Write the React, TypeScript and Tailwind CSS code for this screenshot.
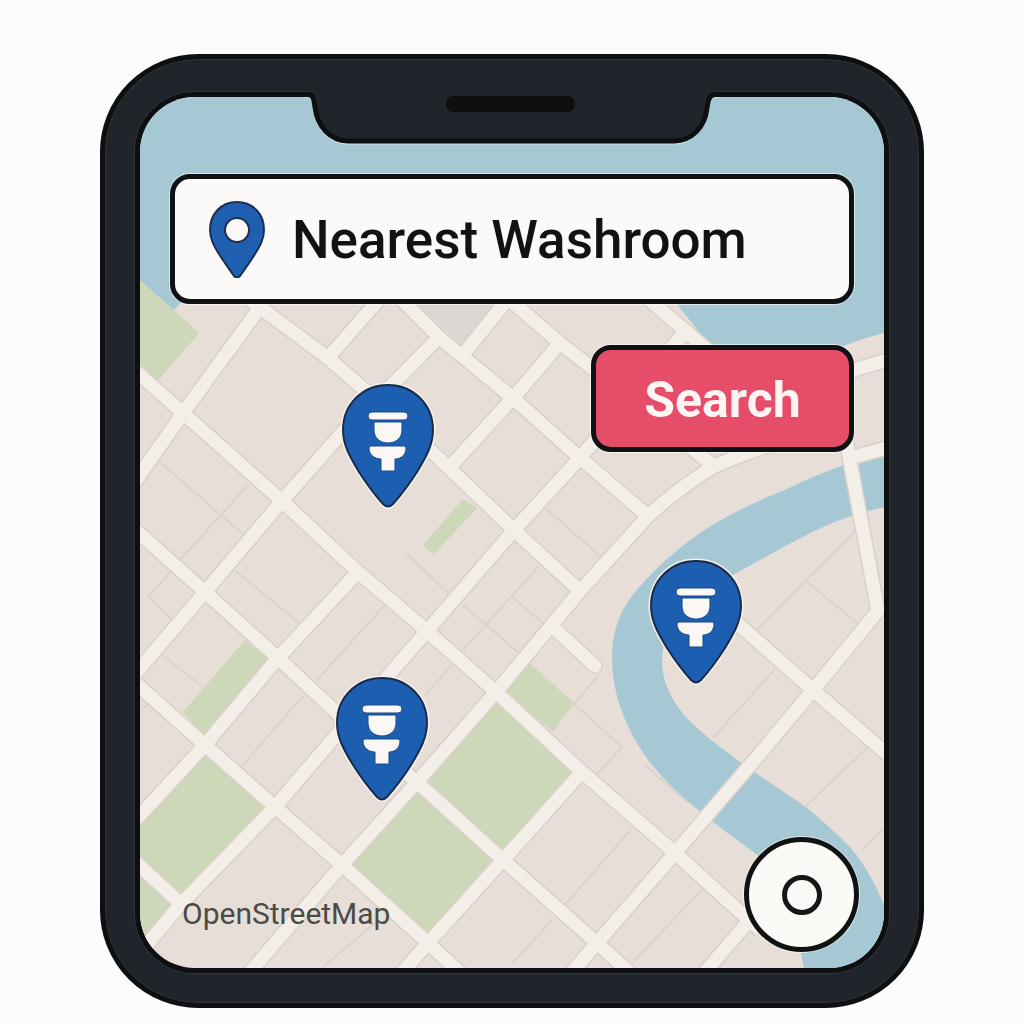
import React from "react";

const MAP = { x: 140, y: 97, width: 744, height: 871 };

const water = [
  "M140 97H884V240H140Z",
  "M140 240H240L174 310L140 281Z",
  "M600 240H884V333C868 337 855 342 843 346L800 368L712 348L676 303Z",
  "M884 453C846 462 812 477 780 492C745 506 716 521 693 538C668 556 646 578 632 596C618 615 612 634 612 657C612 698 628 731 648 760C664 780 680 796 700 811C718 827 738 840 757 855C778 880 794 918 804 968H884V905C874 880 860 856 843 840C830 828 818 816 803 805C782 791 765 779 748 768C728 753 706 737 692 723C674 706 662 684 662 660C662 628 690 600 733 575C768 556 804 534 840 520C855 514 870 511 884 507Z",
];

const parks = [
  "M140 280L199 333L158 380L140 364Z",
  "M245 640L269 660L205 736L183 712Z",
  "M463 499L477 508L433 555L423 545Z",
  "M496 692L582 772L503 860L417 782Z",
  "M417 782L503 860L428 943L342 865Z",
  "M205 745L275 807L180 905L140 868V813Z",
  "M140 868L180 905L148 943L140 936Z",
  "M530 663L574 703L553 732L503 690Z",
];

const lanes = [
  "M160 462L245 536",
  "M248 485L180 560",
  "M150 597L171 619",
  "M148 597L172 570",
  "M162 655L202 686",
  "M236 571L300 624",
  "M385 605L317 680",
  "M303 696L243 765",
  "M140 711L150 702",
  "M406 553L448 593",
  "M463 605L520 654",
  "M512 597L545 625",
  "M538 567L463 650",
  "M546 509L603 558",
  "M452 665L425 695",
  "M599 675L574 704L622 747L594 777",
  "M632 828L565 905",
  "M552 920L512 964",
  "M856 530L757 630",
  "M806 581L858 624",
  "M775 669L713 738",
  "M870 745L806 806",
  "M884 828L862 850",
  "M645 765L688 803",
  "M632 963L702 890",
  "M375 923L323 967",
];

const roads = [
  "M130 366L183 413L282 501L358 572L427 631L496 692L582 772L675 853L760 930",
  "M240 292L261 308L328 358L390 412L448 467L514 530L580 591",
  "M398 296L440 338L513 398L580 458L648 516",
  "M505 296L560 343L630 398L716 468",
  "M645 296L740 378",
  "M130 525L205 592L278 658L337 713L417 782L503 860L597 943L640 982",
  "M130 678L205 745L275 807L342 865L428 943L470 982",
  "M130 857L180 903",
  "M720 608L813 690L894 760",
  "M130 489L183 413L261 306",
  "M130 680L205 592L282 501L340 435L395 382L440 336",
  "M328 358L382 296",
  "M463 355L510 296",
  "M130 826L205 745L278 658L358 572",
  "M130 965L180 905L275 807L333 739L427 631L514 530L580 458L684 333",
  "M245 978L342 865L417 782L496 692L580 591L648 516C672 494 690 481 713 467C740 454 765 446 800 436",
  "M448 469L513 398L560 343",
  "M397 978L428 943L503 860L582 772",
  "M567 978L597 943L675 853L763 750L813 690L878 611L846 440",
  "M700 978L760 908",
  "M840 374L894 358",
  "M850 458L894 446",
];

const deadEnd = "M555 629L595 666";

const pins = [
  { id: "north", label: "Washroom on the north side", x: 342, y: 383 },
  { id: "south", label: "Washroom on the south side", x: 336, y: 676 },
  { id: "river", label: "Washroom by the river", x: 650, y: 559 },
];

function StreetMap() {
  return (
    <svg
      className="absolute inset-0 h-full w-full"
      viewBox="140 97 744 871"
      preserveAspectRatio="none"
      fill="none"
      aria-hidden="true"
    >
      <rect x="140" y="97" width="744" height="871" fill="#e7dfd7" />
      <path d="M408 296H508L463 346Z" fill="#dcd6d2" />
      {parks.map((d) => (
        <path key={d} d={d} fill="#cdd8b8" />
      ))}
      <g stroke="#dcd3cd" strokeWidth="2">
        {lanes.map((d) => (
          <path key={d} d={d} />
        ))}
      </g>
      {water.map((d) => (
        <path key={d} d={d} fill="#a6c8d4" />
      ))}
      <path d={parks[0]} fill="#cdd8b8" />
      <g stroke="#d9cfc8" strokeWidth="16" strokeLinejoin="round">
        {roads.map((d) => (
          <path key={d} d={d} />
        ))}
        <path d={deadEnd} strokeLinecap="round" />
      </g>
      <g stroke="#f4eee8" strokeWidth="13" strokeLinejoin="round">
        {roads.map((d) => (
          <path key={d} d={d} />
        ))}
        <path d={deadEnd} strokeLinecap="round" />
      </g>
    </svg>
  );
}

function WashroomPin() {
  const outline =
    "M46 2C21 2 1 21 1 47C1 62 8 74 17 89C24 100 32 111 41 121Q46 126 51 121C60 111 68 100 75 89C84 74 91 62 91 47C91 21 71 2 46 2Z";
  return (
    <svg viewBox="0 0 92 125" className="h-[125px] w-[92px] overflow-visible" aria-hidden="true">
      <path d={outline} fill="none" stroke="#f6f2ee" strokeWidth="5" />
      <path d={outline} fill="#1c5eb0" stroke="#1a2c4a" strokeWidth="2" />
      <g fill="#faf7f4" stroke="#174a8d" strokeWidth="1">
        <rect x="26" y="29" width="40" height="8" rx="4" />
        <path d="M32 39H60V47C60 55 54 60 46 60S32 55 32 47Z" />
        <path d="M29 63H62Q64 63 64 65C64 72 59 76 53 76V88H39V76C33 76 27 72 27 65Q27 63 29 63Z" />
      </g>
    </svg>
  );
}

function LocationIcon() {
  return (
    <svg viewBox="0 0 58 78" className="h-[78px] w-[58px] shrink-0" aria-hidden="true">
      <path
        d="M29 2C13 2 2 14 2 30C2 39 6 46 11 54C16 62 21 69 26 76Q29 79 32 76C37 69 42 62 47 54C52 46 56 39 56 30C56 14 45 2 29 2Z"
        fill="#1f5fb0"
        stroke="#1c2f50"
        strokeWidth="2"
      />
      <circle cx="29" cy="30" r="12" fill="#fcfaf9" stroke="#1c2f50" strokeWidth="2" />
    </svg>
  );
}

function Notch() {
  return (
    <svg
      viewBox="300 87 426 60"
      className="absolute -top-[10px] left-1/2 h-[60px] w-[426px] -translate-x-1/2"
      fill="none"
      aria-hidden="true"
    >
      <path
        d="M311 87V95C316 97 316 102 316.500 107C318 126 331 141 349 141H675C693 141 706 127 708 108C709 101 710 97 715 95V87Z"
        fill="#20252c"
      />
      <path
        d="M305 97H309C313 99 313 103 314 108C316 128 330 144 349 144H675C694 144 708 128 710 108C711 103 712 99 716 97H720"
        stroke="#d5e6ec"
        strokeWidth="1"
      />
      <path
        d="M300 94.500H309C315 94.500 315 101 316 107C318 126 331 141 349 141H675C693 141 706 127 708 108C709 101 710 94.500 716 94.500H726"
        stroke="#0d0f10"
        strokeWidth="5"
      />
      <rect x="447" y="96" width="129" height="16" rx="7" fill="#0e0f10" />
    </svg>
  );
}

export default function App() {
  return (
    <main className="min-h-screen bg-[#fdfcfd] pt-[54px] pb-4 font-[Roboto,sans-serif]">
      <div className="mx-auto w-full max-w-[824px] rounded-[98px] border-5 border-[#0d0f10] bg-[#20252c] px-[30px] pt-[33px] pb-[30px] inset-ring inset-ring-[#30353b]">
        <div className="relative rounded-[60px] border-5 border-[#0d0f10] ring-1 ring-[#30353b]">
          <div className="relative flex aspect-[744/871] flex-col overflow-hidden rounded-[55px]">
            <StreetMap />

            {pins.map((pin) => (
              <button
                key={pin.id}
                type="button"
                aria-label={pin.label}
                className="absolute cursor-pointer"
                style={{
                  left: `${((pin.x - MAP.x) / MAP.width) * 100}%`,
                  top: `${((pin.y - MAP.y) / MAP.height) * 100}%`,
                }}
              >
                <WashroomPin />
              </button>
            ))}

            <form
              className="relative flex flex-col items-end gap-[41px] px-[30px] pt-[77px]"
              onSubmit={(event) => event.preventDefault()}
            >
              <label className="flex h-[130px] w-full items-center gap-[26px] rounded-[20px] border-5 border-[#0f1112] bg-[#fcfaf9] pr-6 pl-[33px] ring-1 ring-white/60">
                <LocationIcon />
                <input
                  type="text"
                  aria-label="Search the map"
                  defaultValue="Nearest Washroom"
                  className="w-full min-w-0 bg-transparent pt-0.5 text-[53px] leading-[64px] font-medium text-[#111312] outline-none"
                />
              </label>
              <button
                type="submit"
                className="h-[107px] w-[263px] cursor-pointer rounded-[20px] border-5 border-[#0f1112] bg-[#e54d69] pt-0.5 text-[50px] leading-[56px] font-bold text-[#fcf5f4] ring-1 ring-white/60"
              >
                Search
              </button>
            </form>

            <footer className="relative mt-auto flex items-end justify-between pr-[25px] pb-4 pl-[42px]">
              <a href="#map-credits" className="pb-[18px] text-[30px] leading-[40px] text-[#4b4a46]">
                OpenStreetMap
              </a>
              <button
                type="button"
                aria-label="Show my location"
                className="flex size-[115px] cursor-pointer items-center justify-center rounded-full border-5 border-[#111312] bg-[#fcfaf7] ring-1 ring-white/60"
              >
                <span className="size-10 rounded-full border-5 border-[#151716]" />
              </button>
            </footer>
          </div>
          <Notch />
        </div>
      </div>
    </main>
  );
}
